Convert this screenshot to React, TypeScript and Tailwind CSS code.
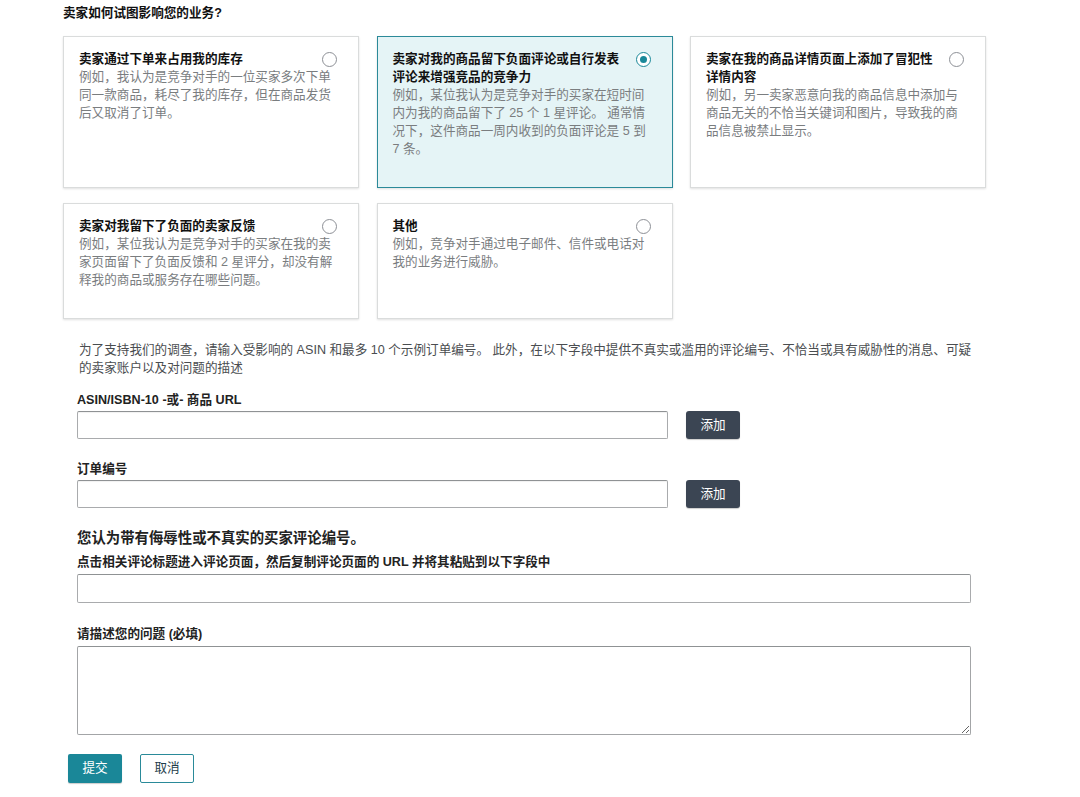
import { ReactNode } from 'react'

type Option = {
  title: string
  desc: ReactNode
  selected?: boolean
}

const row1: Option[] = [
  {
    title: '卖家通过下单来占用我的库存',
    desc: '例如，我认为是竞争对手的一位买家多次下单同一款商品，耗尽了我的库存，但在商品发货后又取消了订单。',
  },
  {
    title: '卖家对我的商品留下负面评论或自行发表评论来增强竞品的竞争力',
    desc: '例如，某位我认为是竞争对手的买家在短时间内为我的商品留下了 25 个 1 星评论。 通常情况下，这件商品一周内收到的负面评论是 5 到 7 条。',
    selected: true,
  },
  {
    title: '卖家在我的商品详情页面上添加了冒犯性详情内容',
    desc: '例如，另一卖家恶意向我的商品信息中添加与商品无关的不恰当关键词和图片，导致我的商品信息被禁止显示。',
  },
]

const row2: Option[] = [
  {
    title: '卖家对我留下了负面的卖家反馈',
    desc: '例如，某位我认为是竞争对手的买家在我的卖家页面留下了负面反馈和 2 星评分，却没有解释我的商品或服务存在哪些问题。',
  },
  {
    title: '其他',
    desc: '例如，竞争对手通过电子邮件、信件或电话对我的业务进行威胁。',
  },
]

function Radio({ on }: { on?: boolean }) {
  return (
    <span
      className={`absolute right-[21px] top-[15px] flex h-[15px] w-[15px] items-center justify-center rounded-full border bg-white ${
        on ? 'border-[#1a8899]' : 'border-[#8d9096]'
      }`}
    >
      {on && <span className="h-[7px] w-[7px] rounded-full bg-[#1a8899]" />}
    </span>
  )
}

function Card({ o, h }: { o: Option; h: string }) {
  return (
    <div
      className={`relative ${h} border pl-[15px] pr-[20px] pt-[13px] shadow-[0_1px_2px_rgba(0,0,0,0.12)] ${
        o.selected ? 'border-[#2b8a99] bg-[#e5f4f6]' : 'border-[#dadcdc] bg-white'
      }`}
    >
      <Radio on={o.selected} />
      <div className="pr-[26px] text-[12.6px] font-bold leading-[18px] text-[#111]">{o.title}</div>
      <div className="text-[12.6px] leading-[18px] text-[#7a7d7f]">{o.desc}</div>
    </div>
  )
}

function TextInput() {
  return (
    <div className="h-[28px] w-[591px] rounded-[2px] border border-[#a9abad] border-t-[#8f9294] bg-white shadow-[inset_0_1px_1px_rgba(0,0,0,0.06)]" />
  )
}

function AddButton() {
  return (
    <button className="ml-[18px] h-[28px] w-[54px] rounded-[3px] bg-[#3b4553] text-[12.6px] text-white shadow-[0_1px_1px_rgba(0,0,0,0.2)]">
      添加
    </button>
  )
}

export default function App() {
  return (
    <div
      className="min-h-[797px] w-[1080px] bg-white pl-[63px] text-[#111]"
      style={{ fontFamily: '"Liberation Sans", "Noto Sans CJK SC", sans-serif' }}
    >
      <div className="pt-[4px] text-[12.6px] font-bold leading-[18px] text-[#111]">卖家如何试图影响您的业务?</div>

      <div className="mt-[14px] grid w-[923px] grid-cols-[296px_296px_296px] gap-x-[17.5px] gap-y-[15px]">
        {row1.map((o) => (
          <Card key={o.title} o={o} h="h-[152px]" />
        ))}
        {row2.map((o) => (
          <Card key={o.title} o={o} h="h-[116px]" />
        ))}
      </div>

      <div className="ml-[14px] w-[895px]">
        <p className="mt-[22px] pl-[2px] text-[12.6px] leading-[18px] text-[#4a4d50]">
          为了支持我们的调查，请输入受影响的 ASIN 和最多 10 个示例订单编号。 此外，在以下字段中提供不真实或滥用的评论编号、不恰当或具有威胁性的消息、可疑的卖家账户以及对问题的描述
        </p>

        <div className="mt-[14px] text-[12.6px] font-bold leading-[18px] text-[#222]">ASIN/ISBN-10 -或- 商品 URL</div>
        <div className="mt-[2px] flex items-center">
          <TextInput />
          <AddButton />
        </div>

        <div className="mt-[21px] text-[12.6px] font-bold leading-[18px] text-[#222]">订单编号</div>
        <div className="mt-[2px] flex items-center">
          <TextInput />
          <AddButton />
        </div>

        <div className="mt-[20px] text-[14.4px] font-bold leading-[20px] text-[#222]">您认为带有侮辱性或不真实的买家评论编号。</div>
        <div className="mt-[5px] text-[12.6px] font-bold leading-[18px] text-[#222]">
          点击相关评论标题进入评论页面，然后复制评论页面的 URL 并将其粘贴到以下字段中
        </div>
        <div className="mt-[3px] h-[29px] w-[894px] rounded-[2px] border border-[#a9abad] border-t-[#8f9294] bg-white" />

        <div className="mt-[22px] text-[12.6px] font-bold leading-[18px] text-[#222]">请描述您的问题 (必填)</div>
        <textarea className="mt-[3px] block h-[89px] w-[894px] resize-y rounded-[2px] border border-[#a3a5a7] border-t-[#8f9294] bg-white outline-none" />
      </div>

      <div className="ml-[5px] mt-[19px] flex gap-[18px]">
        <button className="h-[29px] w-[54px] rounded-[2px] bg-[#1a8798] text-[12.6px] text-white shadow-[0_1px_1px_rgba(0,0,0,0.2)]">
          提交
        </button>
        <button className="h-[29px] w-[54px] rounded-[2px] border border-[#2a8a99] bg-white text-[12.6px] text-[#1e3d4a]">
          取消
        </button>
      </div>
    </div>
  )
}
